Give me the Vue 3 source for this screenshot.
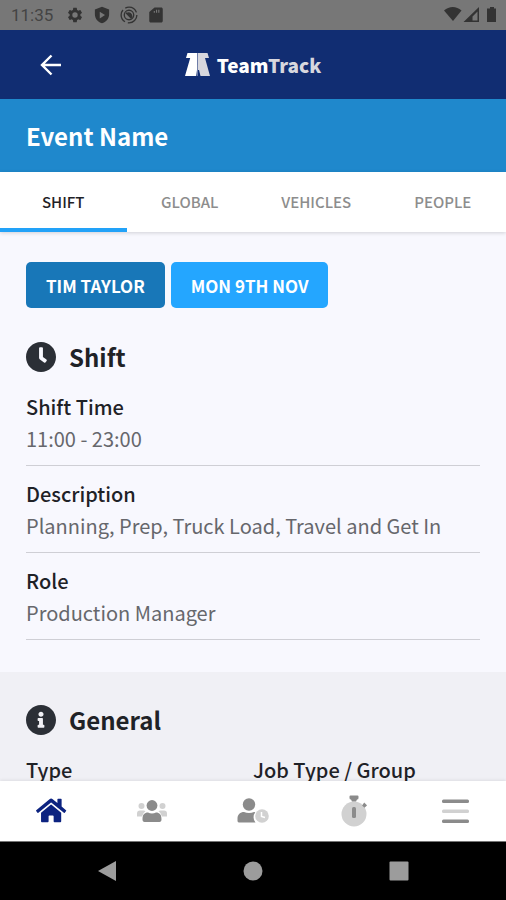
<script setup>
import { ref } from 'vue'

const tabs = ['Shift', 'Global', 'Vehicles', 'People']
const activeTab = ref('Shift')

const shiftDetails = [
  { label: 'Shift Time', value: '11:00 - 23:00' },
  { label: 'Description', value: 'Planning, Prep, Truck Load, Travel and Get In' },
  { label: 'Role', value: 'Production Manager' },
]
</script>

<template>
  <div class="screen">
    <div class="status">
      <span class="time">11:35</span>
      <svg class="status-icon" viewBox="0 0 24 24" aria-hidden="true">
        <path d="M19.14 12.94c.04-.3.06-.61.06-.94 0-.32-.02-.64-.07-.94l2.03-1.58a.49.49 0 0 0 .12-.61l-1.92-3.32a.488.488 0 0 0-.59-.22l-2.39.96c-.5-.38-1.03-.7-1.62-.94l-.36-2.54a.484.484 0 0 0-.48-.41h-3.84c-.24 0-.43.17-.47.41l-.36 2.54c-.59.24-1.13.57-1.62.94l-2.39-.96c-.22-.08-.47 0-.59.22L2.74 8.87c-.12.21-.08.47.12.61l2.03 1.58c-.05.3-.09.63-.09.94s.02.64.07.94l-2.03 1.58a.49.49 0 0 0-.12.61l1.92 3.32c.12.22.37.29.59.22l2.39-.96c.5.38 1.03.7 1.62.94l.36 2.54c.05.24.24.41.48.41h3.84c.24 0 .44-.17.47-.41l.36-2.54c.59-.24 1.13-.56 1.62-.94l2.39.96c.22.08.47 0 .59-.22l1.92-3.32a.49.49 0 0 0-.12-.61l-2.01-1.58zM12 15.6A3.6 3.6 0 1 1 12 8.400a3.600 3.600 0 0 1 0 7.200z" />
      </svg>
      <svg class="status-icon" viewBox="0 0 24 24" aria-hidden="true">
        <path fill-rule="evenodd" d="M12 1L2.500 4.500V11c0 5.600 4 10.700 9.500 12 5.500-1.300 9.500-6.400 9.500-12V4.500zM9 7.500l7 4.500-7 4.500z" />
      </svg>
      <svg class="status-icon" viewBox="0 0 24 24" aria-hidden="true">
        <circle cx="12" cy="12" r="10.500" fill="none" stroke="currentColor" stroke-width="1.800" stroke-dasharray="18 4" />
        <circle cx="12" cy="12" r="6.300" fill="none" stroke="currentColor" stroke-width="1.800" />
        <path d="M8 9l7.500 7.500M10.500 9.500c2.500-.5 4.500 1 5 4z" stroke="currentColor" stroke-width="2" />
      </svg>
      <svg class="status-icon" viewBox="0 0 24 24" aria-hidden="true">
        <path fill-rule="evenodd" d="M19 2h-9L3 8v12c0 1.100.9 2 2 2h14c1.100 0 2-.9 2-2V4c0-1.100-.9-2-2-2zM9 6.500h1.500V9H9zm3-1.500h1.500v4H12zm3 0h1.500v4H15z" />
      </svg>
      <svg class="signals" viewBox="0 0 54 18" aria-hidden="true">
        <path d="M0 4.500C5-.2 12.500-.2 17.500 4.500L9 15z" />
        <path fill-rule="evenodd" d="M35 1v15H19.500zM33.500 5.500l-5 5V14.500h5z" />
        <path d="M46 1h4v1.500h2V16h-9V2.500h3z" />
      </svg>
    </div>

    <header class="appbar">
      <button class="back" type="button" aria-label="Back">
        <svg viewBox="0 0 24 24" aria-hidden="true">
          <path d="M22 12H3M12.500 2.500L3 12l9.500 9.500" fill="none" stroke="currentColor" stroke-width="2.400" />
        </svg>
      </button>
      <a class="brand" href="#">
        <svg viewBox="0 0 25 23" aria-hidden="true">
          <path d="M2.500 0H12v17l-.8 6H0L5.200 5H1z" fill="#fff" />
          <path d="M12.500 0h10L24 5h-4l5 18h-9.500l-1.500-6h-1.500z" fill="#d7d7de" />
          <path d="M12.500 1v3M12.500 7v5M12.500 16v7" stroke="#6d7ca8" stroke-width="1" />
        </svg>
        <span>Team<span class="brand-tail">Track</span></span>
      </a>
    </header>

    <h1 class="event">Event Name</h1>

    <nav class="tabs" aria-label="Event sections">
      <button
        v-for="tab in tabs"
        :key="tab"
        type="button"
        class="tab"
        :class="{ active: tab === activeTab }"
        @click="activeTab = tab"
      >{{ tab }}</button>
    </nav>

    <main class="content">
      <section class="panel">
        <div class="chips">
          <button class="chip person" type="button">Tim Taylor</button>
          <button class="chip date" type="button">Mon 9th Nov</button>
        </div>
        <h2 class="heading">
          <svg viewBox="8 8 496 496" aria-hidden="true">
            <path d="M256,8C119,8,8,119,8,256S119,504,256,504,504,393,504,256,393,8,256,8Zm92.490,313h0l-20,25a16,16,0,0,1-22.490,2.500h0l-67-49.720a40,40,0,0,1-15-31.230V112a16,16,0,0,1,16-16h32a16,16,0,0,1,16,16V256l58,42.500A16,16,0,0,1,348.490,321Z" />
          </svg>
          Shift
        </h2>
        <dl class="details">
          <div v-for="item in shiftDetails" :key="item.label" class="detail">
            <dt>{{ item.label }}</dt>
            <dd>{{ item.value }}</dd>
          </div>
        </dl>
      </section>

      <section class="panel general">
        <h2 class="heading">
          <svg viewBox="8 8 496 496" aria-hidden="true">
            <path d="M256 8C119.043 8 8 119.083 8 256c0 136.997 111.043 248 248 248s248-111.003 248-248C504 119.083 392.957 8 256 8zm0 110c23.196 0 42 18.804 42 42s-18.804 42-42 42-42-18.804-42-42 18.804-42 42-42zm56 254c0 6.627-5.373 12-12 12h-88c-6.627 0-12-5.373-12-12v-24c0-6.627 5.373-12 12-12h12v-64h-12c-6.627 0-12-5.373-12-12v-24c0-6.627 5.373-12 12-12h64c6.627 0 12 5.373 12 12v100h12c6.627 0 12 5.373 12 12v24z" />
          </svg>
          General
        </h2>
        <dl class="columns">
          <dt>Type</dt>
          <dt>Job Type / Group</dt>
        </dl>
      </section>
    </main>

    <nav class="bottom" aria-label="Main">
      <a class="home" href="#" aria-label="Home">
        <svg viewBox="0 0 32 32" aria-hidden="true">
          <g transform="translate(1 2) scale(.0525)">
            <path d="M280.370 148.260L96 300.110V464a16 16 0 0 0 16 16l112.060-.29a16 16 0 0 0 15.920-16V368a16 16 0 0 1 16-16h64a16 16 0 0 1 16 16v95.640a16 16 0 0 0 16 16.050L464 480a16 16 0 0 0 16-16V300L295.670 148.260a12.190 12.190 0 0 0-15.300 0zM571.600 251.470L488 182.560V44.050a12 12 0 0 0-12-12h-56a12 12 0 0 0-12 12v72.610L318.470 43a48 48 0 0 0-61 0L4.340 251.470a12 12 0 0 0-1.600 16.900l25.500 31A12 12 0 0 0 45.150 301l235.220-193.740a12.190 12.190 0 0 1 15.300 0L530.900 301a12 12 0 0 0 16.900-1.600l25.500-31a12 12 0 0 0-1.700-16.930z" />
          </g>
        </svg>
      </a>
      <a href="#" aria-label="Team">
        <svg viewBox="0 0 32 32" aria-hidden="true">
          <g fill="#d1d1d1">
            <circle cx="5.500" cy="11" r="3" />
            <circle cx="26.500" cy="11" r="3" />
            <path d="M1 21.500v-3a3 3 0 0 1 3-3h3.500c.8 0 1.500.3 2 .8a8 8 0 0 0-3.500 5.200zM31 21.500v-3a3 3 0 0 0-3-3h-3.500c-.8 0-1.500.3-2 .8a8 8 0 0 1 3.500 5.200z" />
          </g>
          <circle cx="16" cy="10.500" r="5.400" />
          <path d="M6.500 24.500c0-5 2-7 5.500-7 2.400 1.200 5.600 1.200 8 0 3.500 0 5.500 2 5.500 7 0 1.500-.7 2.500-2 2.500h-15c-1.300 0-2-1-2-2.500z" />
        </svg>
      </a>
      <a href="#" aria-label="Timesheets">
        <svg viewBox="0 0 32 32" aria-hidden="true">
          <circle cx="12" cy="9.500" r="6.200" />
          <path d="M.5 26v-2.500C.5 19.500 3.300 17 7 17c3 1.200 7 1.200 10 0l1.300.3a8 8 0 0 0 .2 10.200H2.500c-1.300 0-2-.7-2-1.500z" />
          <circle cx="25" cy="21" r="6.800" fill="#d1d1d1" />
          <path d="M24.500 17v4.500l3.500 1" fill="none" stroke="#fff" stroke-width="1.500" />
        </svg>
      </a>
      <a href="#" aria-label="Timer">
        <svg viewBox="0 0 32 32" aria-hidden="true">
          <circle cx="16" cy="19" r="12.500" fill="#d1d1d1" />
          <path d="M12.500 .5h7a1 1 0 0 1 1 1v1.500a1.500 1.500 0 0 1-1.500 1.500L18 6.500h-4l-1-2A1.500 1.500 0 0 1 11.500 3V1.500a1 1 0 0 1 1-1z" />
          <rect x="14" y="12" width="4" height="11" rx="1.500" />
          <path d="M26.200 7.500l2 2 .8 1-2.500 2.300-2.400-2.400z" />
        </svg>
      </a>
      <button type="button" aria-label="Menu">
        <svg viewBox="0 0 32 32" aria-hidden="true">
          <rect x="3" y="4.500" width="27" height="3.500" rx="1.500" />
          <rect x="3" y="14.500" width="27" height="3.500" rx="1.500" fill="#d1d1d1" />
          <rect x="3" y="24.500" width="27" height="3.500" rx="1.500" />
        </svg>
      </button>
    </nav>

    <div class="system">
      <button type="button" aria-label="System back">
        <svg viewBox="0 0 20 20" aria-hidden="true"><path d="M19 0v20L1 10z" /></svg>
      </button>
      <button type="button" aria-label="System home">
        <svg viewBox="0 0 20 20" aria-hidden="true"><circle cx="10" cy="10" r="9.500" /></svg>
      </button>
      <button type="button" aria-label="Recent apps">
        <svg viewBox="0 0 20 20" aria-hidden="true"><rect width="19" height="19" x=".5" y=".5" rx="1" /></svg>
      </button>
    </div>
  </div>
</template>

<style>
body {
  margin: 0;
}
</style>

<style scoped>
.screen {
  display: flex;
  flex-direction: column;
  height: 100vh;
  overflow: hidden;
  background: #f8f8fe;
  color: #1f2227;
  font-family: "Noto Sans CJK JP", "Noto Sans", sans-serif;
}

button {
  padding: 0;
  border: 0;
  background: none;
  color: inherit;
  font: inherit;
  cursor: pointer;
}

svg {
  display: block;
  fill: currentColor;
}

h1,
h2,
dl,
dd {
  margin: 0;
}

.status {
  display: flex;
  flex: none;
  align-items: center;
  gap: 9px;
  height: 30px;
  padding: 0 8px 0 11px;
  background: #777;
  color: #333;
}

.time {
  margin-right: 4px;
  color: #444;
  font: 17px/30px Roboto, sans-serif;
}

.status-icon {
  width: 18px;
  height: 18px;
}

.signals {
  width: 54px;
  height: 18px;
  margin-left: auto;
}

.appbar {
  display: grid;
  flex: none;
  grid-template-columns: 1fr auto 1fr;
  align-items: center;
  height: 69px;
  padding: 0 39px;
  background: #112d72;
  color: #fff;
}

.back {
  justify-self: start;
}

.back svg {
  width: 24px;
  height: 24px;
}

.brand {
  display: flex;
  align-items: center;
  gap: 7px;
  color: #fff;
  font-size: 19px;
  font-weight: 900;
  line-height: 24px;
  text-decoration: none;
}

.brand svg {
  width: 25px;
  height: 23px;
}

.brand-tail {
  color: #d7d7de;
}

.event {
  flex: none;
  padding: 0 26px;
  background: #1f88cc;
  color: #fff;
  font-size: 24px;
  font-weight: 700;
  line-height: 73px;
}

.tabs {
  display: grid;
  flex: none;
  grid-template-columns: repeat(4, 1fr);
  background: #fff;
  box-shadow: 0 1px 4px rgba(0, 0, 0, 0.16);
  z-index: 1;
}

.tab {
  height: 60px;
  border-top: 2px solid transparent;
  border-bottom: 4px solid transparent;
  color: #8d8d8d;
  font-size: 15px;
  font-weight: 500;
  text-transform: uppercase;
}

.tab.active {
  border-bottom-color: #22a2f8;
  color: #1f2227;
}

.content {
  flex: 1;
  min-height: 0;
  overflow: hidden;
}

.panel {
  padding: 30px 26px 32px;
}

.chips {
  display: flex;
  gap: 6px;
  margin-bottom: 34px;
}

.chip {
  height: 46px;
  padding: 0 20px;
  border-radius: 5px;
  color: #fff;
  font-size: 17px;
  font-weight: 700;
  text-transform: uppercase;
}

.person {
  background: #1877b8;
}

.date {
  background: #24a6ff;
}

.heading {
  display: flex;
  align-items: center;
  gap: 13px;
  margin-bottom: 7px;
  font-size: 24px;
  font-weight: 700;
  line-height: 30px;
}

.heading svg {
  width: 30px;
  height: 30px;
  color: #2b2f36;
}

.detail {
  padding: 12px 0 10px;
  border-bottom: 1px solid #cfcfd5;
}

dt,
dd {
  font-size: 20px;
  line-height: 32px;
}

dt {
  font-weight: 500;
}

dd {
  color: #66676c;
  font-weight: 400;
}

.general {
  padding-top: 33px;
  background: #f0f0f5;
}

.columns {
  display: grid;
  grid-template-columns: 1fr 1fr;
  padding-top: 12px;
}

.bottom {
  display: grid;
  flex: none;
  grid-template-columns: repeat(5, 1fr);
  align-items: center;
  height: 60px;
  background: #fff;
  color: #8b8b8b;
  box-shadow: 0 -1px 3px rgba(0, 0, 0, 0.08);
  z-index: 1;
}

.bottom > * {
  display: flex;
  justify-content: center;
  color: inherit;
}

.bottom svg {
  width: 32px;
  height: 32px;
}

.bottom .home {
  color: #0c2380;
}

.system {
  display: flex;
  flex: none;
  align-items: center;
  justify-content: center;
  gap: 126px;
  height: 58px;
  border-top: 1px solid #777;
  background: #000;
  color: #9c9c9c;
}

.system svg {
  width: 20px;
  height: 20px;
}
</style>
